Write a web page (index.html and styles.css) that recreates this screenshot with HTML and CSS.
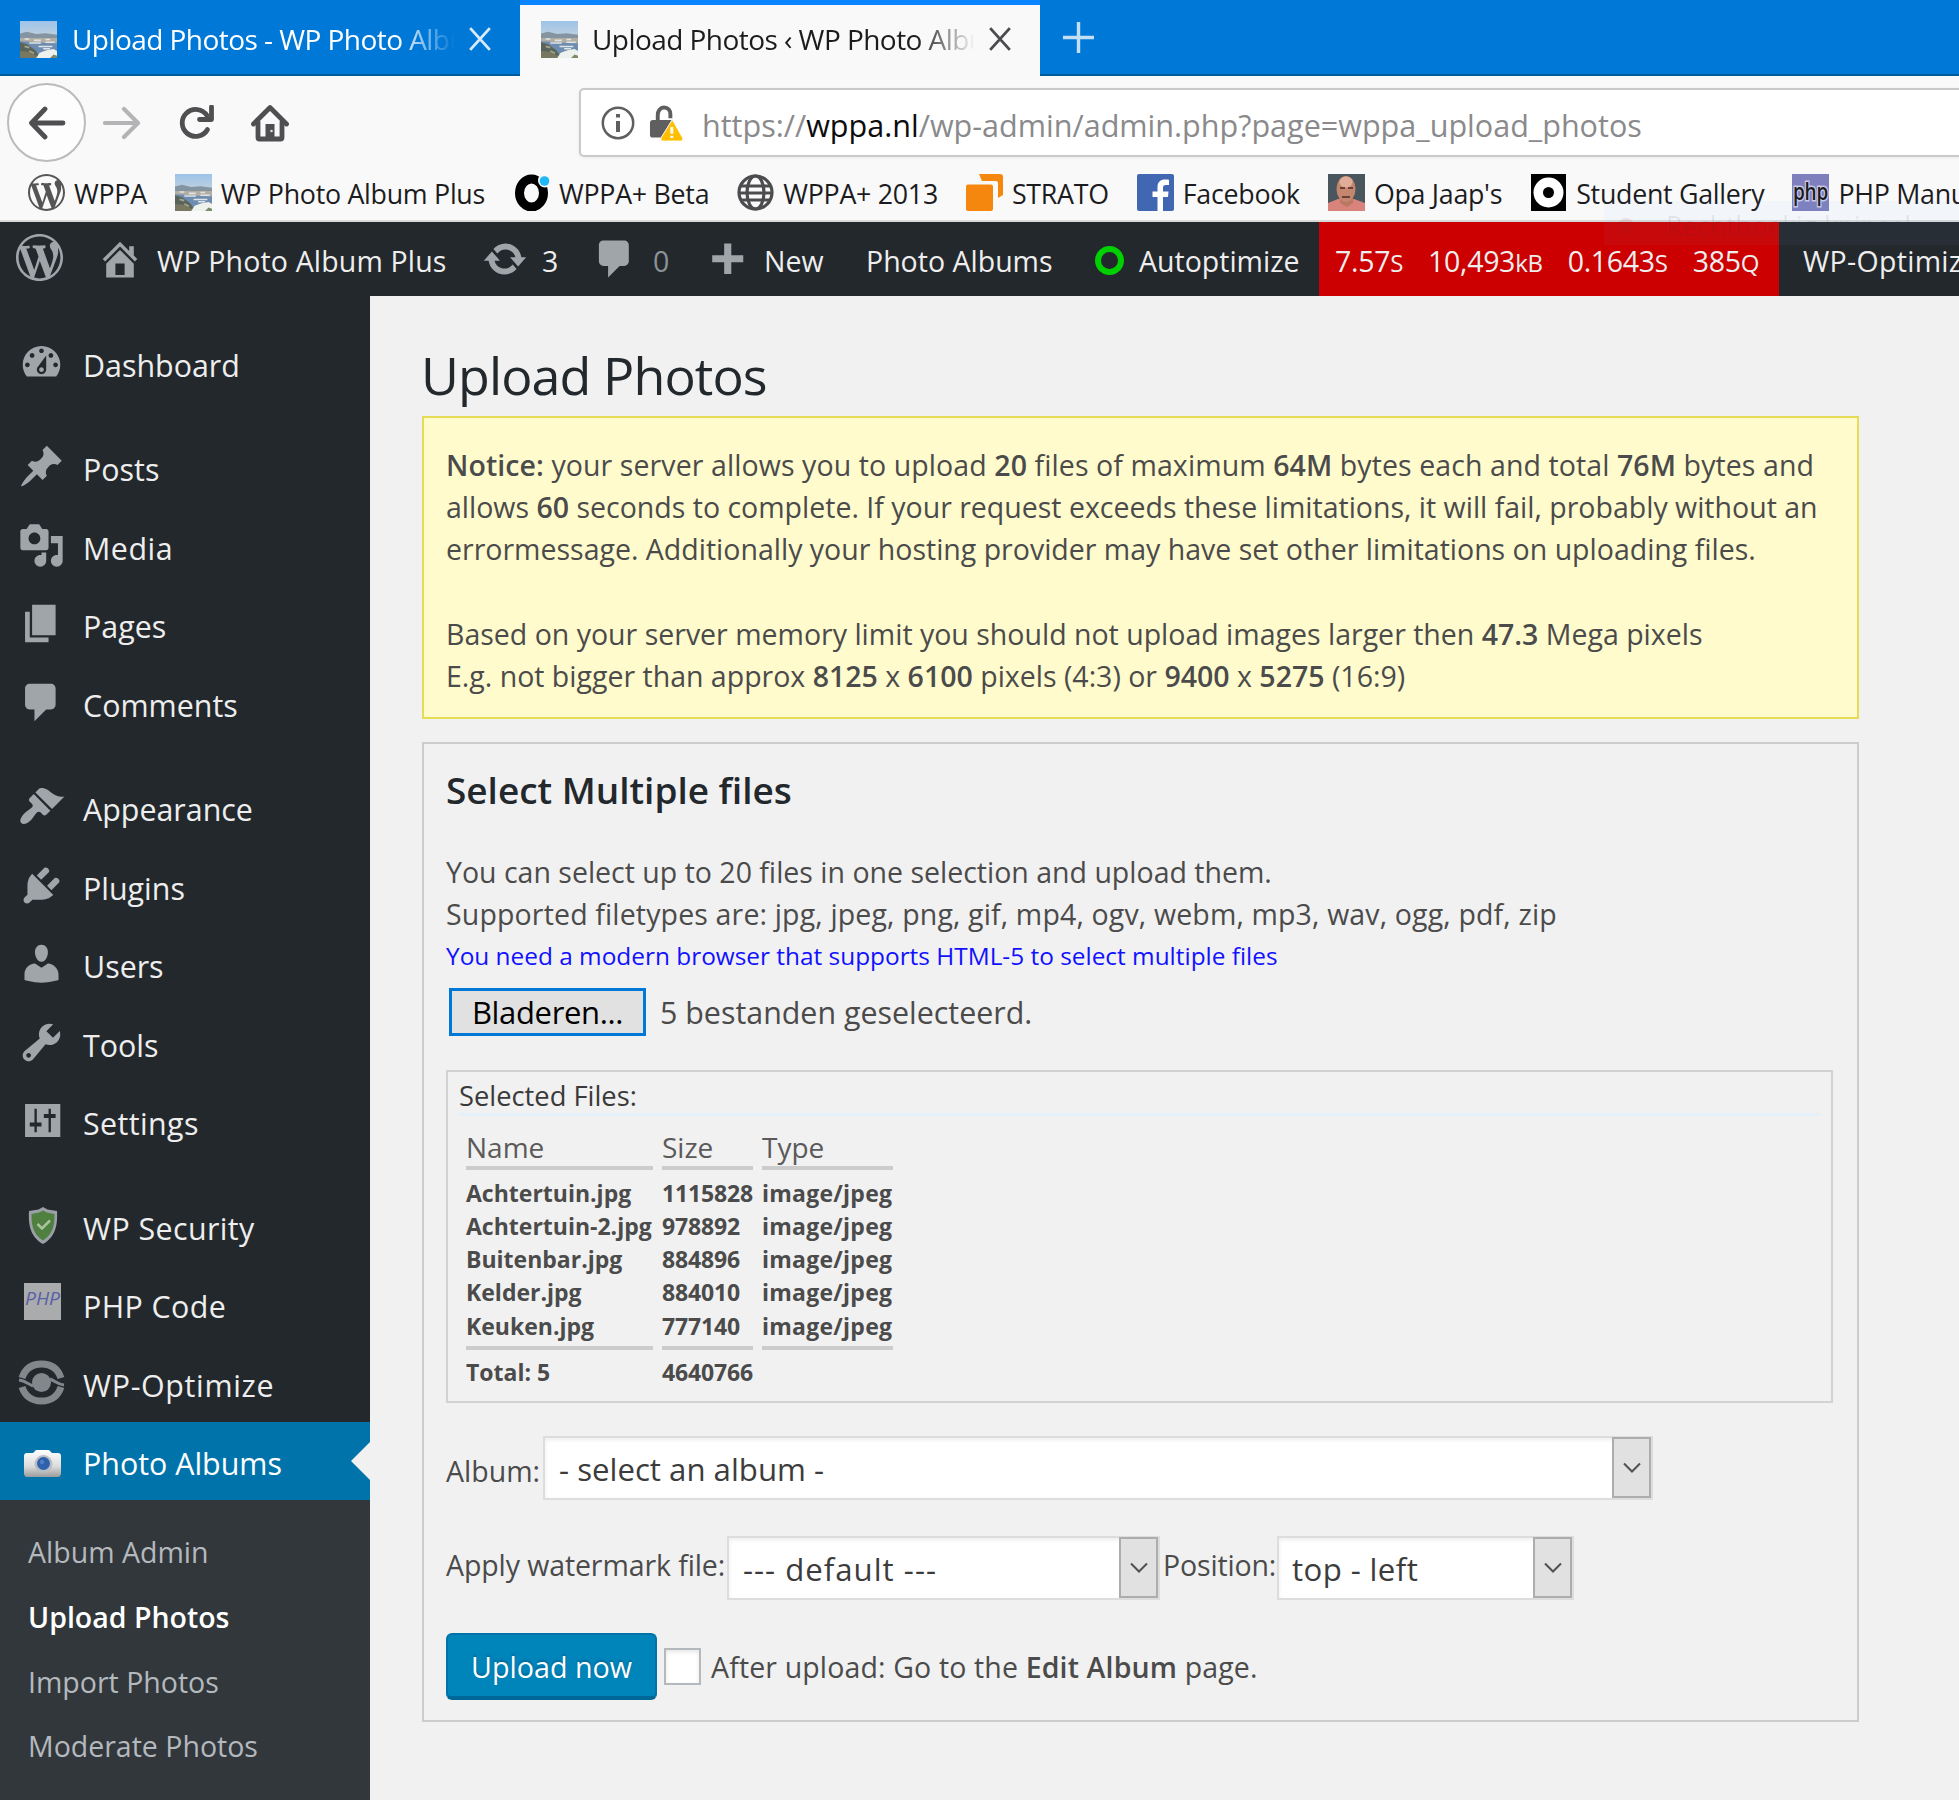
FILE: index.html
```html
<!DOCTYPE html>
<html lang="en">
<head>
  <meta charset="UTF-8" />
  <title>Upload Photos ‹ WP Photo Album Plus</title>
  <link rel="stylesheet" href="styles.css">
</head>
<body>
  <!-- shared icons -->
  <svg class="defs" aria-hidden="true">
    <linearGradient id="sky" x1="0" y1="0" x2="0" y2="1">
      <stop offset="0" stop-color="#9dc3ea" />
      <stop offset="1" stop-color="#bccfe0" />
    </linearGradient>
    <linearGradient id="silver" x1="0" y1="0" x2="0" y2="1">
      <stop offset="0" stop-color="#ffffff" />
      <stop offset=".6" stop-color="#dcdcdc" />
      <stop offset="1" stop-color="#9c9c9c" />
    </linearGradient>
    <symbol id="photo" viewBox="0 0 16 16">
      <rect width="16" height="16" fill="#8298ab" />
      <rect width="16" height="6" fill="url(#sky)" />
      <path d="M0 5.400l3-.7 4 .9 4-.3 5 .6V8H0z" fill="#8495a1" />
      <path d="M0 7.400h16v2H0z" fill="#b3aea4" />
      <path d="M0 8.800l6 .3 10 1V14H0z" fill="#6d8cb0" />
      <path d="M2 7.800h2M6 8.400h3M11 8h2M4 9.500h5M8 11h6M11 9.200h4M10 12h3" stroke="#dfe3e4" stroke-width=".7" />
      <path d="M0 9.200l3 .8 3.500 2.500L9 16H0z" fill="#59645a" />
      <path d="M2 11l2 .5M4 13l2 1" stroke="#a9a48c" stroke-width=".8" />
      <path d="M0 13l4 .3 3 1.600L8 16H0z" fill="#77785f" />
      <path d="M7 16l1.500-2.300 3-1 3-.6L16 13v3z" fill="#eef2ec" />
      <path d="M13 16l1.500-1.500L16 15v1z" fill="#7c8c6a" />
    </symbol>
    <symbol id="wp" viewBox="0 0 20 20">
      <path d="M20 10c0-5.51-4.49-10-10-10C4.48 0 0 4.49 0 10c0 5.52 4.48 10 10 10 5.51 0 10-4.48 10-10zM7.78 15.37L4.37 6.22c.55-.02 1.17-.08 1.17-.08.5-.06.44-1.13-.06-1.11 0 0-1.45.11-2.37.11-.18 0-.37 0-.58-.01C4.12 2.69 6.87 1.11 10 1.11c2.33 0 4.45.87 6.05 2.34-.68-.11-1.65.39-1.65 1.58 0 .74.45 1.36.9 2.1.35.61.55 1.36.55 2.46 0 1.49-1.4 5-1.4 5l-3.03-8.37c.54-.02.82-.17.82-.17.5-.05.44-1.25-.06-1.22 0 0-1.44.12-2.38.12-.87 0-2.33-.12-2.33-.12-.5-.03-.56 1.2-.06 1.22l.92.08 1.26 3.41zM17.41 10c.24-.64.74-1.87.43-4.25.7 1.29 1.05 2.71 1.05 4.25 0 3.29-1.73 6.24-4.4 7.78.97-2.59 1.94-5.2 2.92-7.78zM6.1 18.09C3.12 16.65 1.11 13.53 1.11 10c0-1.3.23-2.48.72-3.59C3.25 10.3 4.67 14.2 6.1 18.09zm4.03-6.63l2.58 6.98c-.86.29-1.76.45-2.71.45-.79 0-1.57-.11-2.29-.33.81-2.38 1.62-4.74 2.42-7.1z" />
    </symbol>
    <symbol id="comment" viewBox="0 0 20 20">
      <path d="M5 2h9c1.1 0 2 .9 2 2v7c0 1.1-.9 2-2 2h-2l-5 5v-5H5c-1.1 0-2-.9-2-2V4c0-1.1.9-2 2-2z" />
    </symbol>
  </svg>

  <div class="tabs">
    <div class="tab">
      <svg class="favicon"><use href="#photo" /></svg>
      <span class="tab-title">Upload Photos - WP Photo Albu</span>
      <svg class="tab-close" viewBox="0 0 22 22"><path d="M2 1l18 20M20 1L2 21" /></svg>
    </div>
    <div class="tab tab-active">
      <svg class="favicon"><use href="#photo" /></svg>
      <span class="tab-title">Upload Photos ‹ WP Photo Albu</span>
      <svg class="tab-close" viewBox="0 0 22 22"><path d="M2 1l18 20M20 1L2 21" /></svg>
    </div>
    <svg class="tab-new" viewBox="0 0 33 33"><path d="M16.500 1v31M1 16.500h31" /></svg>
  </div>

  <div class="toolbar">
    <div class="back">
      <svg viewBox="0 0 38 34"><path d="M35 17H4M17 3L3.500 17 17 31" /></svg>
    </div>
    <svg class="forward" viewBox="0 0 38 34"><path d="M2 17h32M21 3l14 14-14 14" /></svg>
    <svg class="reload" viewBox="0 0 38 36"><path d="M29.500 24.500A13.500 13.500 0 1 1 29 10.500" /><path d="M33.500 2v12.500H21.500" /></svg>
    <svg class="home" viewBox="0 0 38 38">
      <path d="M2.500 20L19 3.500 35.500 20" />
      <path d="M7 18v15.500c0 1 .5 1.500 1.500 1.500h21c1 0 1.500-.5 1.500-1.500V18" />
      <path d="M14.500 20h9v15h-9z" class="door" />
      <circle cx="20.500" cy="27" r="1.300" class="knob" />
    </svg>
    <div class="urlbar">
      <svg class="info" viewBox="0 0 34 34">
        <circle cx="17" cy="17" r="15.200" />
        <path d="M17 15v11M17 8v3.500" />
      </svg>
      <svg class="lock" viewBox="0 0 36 37">
        <path d="M9 17V10c0-4.600 2.500-8 6.500-8S22 5 22 9v4" class="shackle" />
        <path d="M4 15h20v18H4c-2 0-3-1-3-3V18c0-2 1-3 3-3z" fill="#5f5f5f" />
        <path d="M24 14.500L12.500 33c-1 2 0 3.600 2 3.600h18c2 0 3-1.600 2-3.600z" class="warn" />
        <path d="M23.500 22v7M23.500 31v2.500" class="mark" />
      </svg>
      <span class="url">https://<b>wppa.nl</b>/wp-admin/admin.php?page=wppa_upload_photos</span>
    </div>
  </div>

  <div class="bookmarks">
    <a><svg class="bm-wp"><use href="#wp" /></svg><span>WPPA</span></a>
    <a><svg><use href="#photo" /></svg><span>WP Photo Album Plus</span></a>
    <a>
      <svg viewBox="0 0 37 37"><ellipse cx="18.500" cy="19" rx="12" ry="14" fill="none" stroke="#000" stroke-width="9" /><circle cx="32" cy="6.500" r="7" fill="#f9f9fa" /><circle cx="31.500" cy="7" r="4.800" fill="#1db8f5" /></svg><span>WPPA+ Beta</span>
    </a>
    <a>
      <svg viewBox="0 0 37 37" class="globe"><circle cx="18.500" cy="18.500" r="16.500" /><ellipse cx="18.500" cy="18.500" rx="8.500" ry="16.500" /><path d="M4 12h29M2 19h33M4 26h29" /></svg><span>WPPA+ 2013</span>
    </a>
    <a>
      <svg viewBox="0 0 37 37" fill="#f5870f"><path d="M13 0h21a3 3 0 0 1 3 3v18l-5 3V9a2 2 0 0 0-2-2H16z" /><rect y="10.500" width="27" height="26.500" rx="2" /></svg><span>STRATO</span>
    </a>
    <a>
      <svg viewBox="0 0 37 37"><rect width="37" height="37" rx="2" fill="#4267b2" /><path d="M20.500 37V23h-5v-5.500h5V13c0-5 3-7.500 7.500-7.500 1.500 0 3 .1 4 .3V11h-3c-2.300 0-3 1-3 3v3.500h5.500L31 23h-5v14z" fill="#fff" /></svg><span>Facebook</span>
    </a>
    <a>
      <svg viewBox="0 0 37 37"><rect width="37" height="37" fill="#4a565e" /><path d="M0 37V29l10-4h16l11 4v8z" fill="#d8837c" /><path d="M12 20h13v9l-6 4-7-4z" fill="#b9785f" /><ellipse cx="18" cy="15" rx="9.500" ry="13" fill="#c4866c" /><ellipse cx="18" cy="8" rx="6.500" ry="5.500" fill="#e0ae98" /><path d="M12 14h5M20 14h5M14 23h8" stroke="#6b3f35" stroke-width="2" /></svg><span>Opa Jaap's</span>
    </a>
    <a>
      <svg viewBox="0 0 37 37"><rect x="1" width="35" height="37" fill="#000" /><circle cx="18.500" cy="18.500" r="15" fill="#fff" /><circle cx="18.500" cy="18.500" r="5.500" fill="#000" /></svg><span>Student Gallery</span>
    </a>
    <a>
      <svg viewBox="0 0 37 37"><rect width="37" height="37" fill="#7f7fbd" /><text x="1" y="26" class="php-icon" textLength="35" lengthAdjust="spacingAndGlyphs">php</text></svg><span>PHP Manual</span>
    </a>
  </div>

  <div class="adminbar">
    <svg class="ab-wp"><use href="#wp" /></svg>
    <div class="ab-item ab-site">
      <svg viewBox="0 0 20 20"><path d="M16 8.500l1.530 1.530-1.060 1.060L10 4.600l-6.470 6.490-1.060-1.060L10 2.500l4 4v-2h2v4zm-6-2.460l6 5.990V18H4v-5.970zM12 17v-5H8v5h4z" /></svg>
      <span>WP Photo Album Plus</span>
    </div>
    <div class="ab-item ab-updates">
      <svg viewBox="0 0 20 20"><path d="M10.200 3.280c3.530 0 6.430 2.610 6.920 6h2.080l-3.500 4-3.500-4h2.320c-.45-1.970-2.210-3.450-4.320-3.450-1.450 0-2.730.71-3.540 1.780L4.950 5.660C6.230 4.200 8.110 3.280 10.200 3.280zm-.4 13.440c-3.520 0-6.430-2.610-6.920-6H.8l3.500-4c1.170 1.330 2.330 2.670 3.500 4H5.480c.45 1.970 2.210 3.450 4.320 3.450 1.450 0 2.730-.71 3.540-1.780l1.710 1.950c-1.280 1.460-3.150 2.380-5.250 2.380z" /></svg>
      <span>3</span>
    </div>
    <div class="ab-item ab-comments">
      <svg><use href="#comment" /></svg>
      <span class="zero">0</span>
    </div>
    <div class="ab-item ab-new">
      <svg viewBox="0 0 20 20"><path d="M17.500 8.400v3h-5.200v5.100H9.200v-5.100H4v-3h5.200V3.300h3.100v5.100z" /></svg>
      <span>New</span>
    </div>
    <div class="ab-item ab-albums"><span>Photo Albums</span></div>
    <div class="ab-item ab-auto"><i class="ring"></i><span>Autoptimize</span></div>
    <div class="ab-item ab-stats">
      <span>7.57<small>S</small></span>
      <span>10,493<small>kB</small></span>
      <span>0.1643<small>S</small></span>
      <span>385<small>Q</small></span>
    </div>
    <div class="ab-item ab-optimize"><span>WP-Optimize</span></div>
  </div>

  <!-- fading snip menu entry -->
  <div class="ghost"><i></i><span>Rechthoekig knipsel</span></div>

  <div class="wrap">
    <div class="sidebar">
      <a class="menu"><svg viewBox="0 0 20 20"><path d="M3.760 16h12.480c1.100-1.370 1.760-3.110 1.760-5 0-4.420-3.580-8-8-8s-8 3.580-8 8c0 1.890.66 3.630 1.760 5zM10 4c.55 0 1 .45 1 1s-.45 1-1 1-1-.45-1-1 .45-1 1-1zM6 6c.55 0 1 .45 1 1s-.45 1-1 1-1-.45-1-1 .45-1 1-1zm8 0c.55 0 1 .45 1 1s-.45 1-1 1-1-.45-1-1 .45-1 1-1zm-5.370 5.550L12 7v6c0 1.100-.9 2-2 2s-2-.9-2-2c0-.57.24-1.080.63-1.450zM4 10c.55 0 1 .45 1 1s-.45 1-1 1-1-.45-1-1 .45-1 1-1zm12 0c.55 0 1 .45 1 1s-.45 1-1 1-1-.45-1-1 .45-1 1-1zm-5 3c0-.55-.45-1-1-1s-1 .45-1 1 .45 1 1 1 1-.45 1-1z" /></svg><span>Dashboard</span></a>
      <div class="separator"></div>
      <a class="menu"><svg viewBox="0 0 20 20"><path d="M10.440 3.020l1.820-1.820 6.360 6.350-1.830 1.820c-1.050-.68-2.480-.57-3.410.36l-.75.75c-.92.93-1.040 2.350-.35 3.410l-1.830 1.820-2.410-2.410-2.800 2.790c-.42.42-3.380 2.710-3.800 2.290s1.860-3.390 2.280-3.810l2.790-2.790L4.100 9.360l1.830-1.820c1.050.69 2.480.57 3.400-.36l.75-.75c.93-.92 1.050-2.350.36-3.410z" /></svg><span>Posts</span></a>
      <a class="menu"><svg viewBox="0 0 20 20"><path d="M13 11V4c0-.55-.45-1-1-1h-1.670L9 1H5L3.670 3H2c-.55 0-1 .45-1 1v7c0 .55.45 1 1 1h10c.55 0 1-.45 1-1zM7 4.500c1.380 0 2.500 1.120 2.500 2.500S8.380 9.500 7 9.500 4.500 8.380 4.500 7 5.620 4.500 7 4.500zM14 6h5v10.500c0 1.380-1.120 2.500-2.500 2.500S14 17.880 14 16.500s1.120-2.500 2.500-2.500c.17 0 .34.02.5.05V9h-3V6zm-4 8.050V13h2v3.500c0 1.380-1.120 2.500-2.500 2.500S7 17.880 7 16.500 8.120 14 9.500 14c.17 0 .34.02.5.05z" /></svg><span class="media">Media</span></a>
      <a class="menu"><svg viewBox="0 0 20 20"><path d="M6 15V2h10v13H6zm-1 1h8v2H3V5h2v11z" /></svg><span>Pages</span></a>
      <a class="menu"><svg><use href="#comment" /></svg><span>Comments</span></a>
      <div class="separator"></div>
      <a class="menu"><svg viewBox="0 0 20 20"><path d="M14.480 11.060L7.410 3.990l1.500-1.500c.5-.56 2.300-.47 3.510.32 1.210.8 1.430 1.280 2.910 2.100 1.180.64 2.450 1.260 4.450.85zm-.71.71L6.700 4.700 4.930 6.470c-.39.39-.39 1.020 0 1.410l1.060 1.060c.39.39.39 1.030 0 1.420-.6.6-1.430 1.110-2.210 1.690-.35.26-.7.53-1.010.84C1.430 14.230.4 16.080 1.400 17.070c.99 1 2.840-.03 4.180-1.360.31-.31.58-.66.85-1.020.57-.78 1.080-1.610 1.690-2.210.39-.39 1.020-.39 1.410 0l1.060 1.060c.39.39 1.020.39 1.410 0z" /></svg><span>Appearance</span></a>
      <a class="menu"><svg viewBox="0 0 20 20"><path d="M13.110 4.360L9.870 7.600 8 5.730l3.240-3.240c.35-.34 1.050-.2 1.560.32.52.51.66 1.210.31 1.550zm-8 1.770l.91-1.120 9.010 9.010-1.190.84c-.71.71-2.630 1.160-3.820 1.160H6.140L4.900 17.260c-.59.59-1.540.59-2.120 0-.59-.58-.59-1.530 0-2.120l1.240-1.240v-3.880c0-1.130.4-3.190 1.090-3.890zm7.260 3.970l3.240-3.240c.34-.35 1.040-.21 1.550.31.52.51.66 1.210.31 1.550l-3.240 3.250z" /></svg><span>Plugins</span></a>
      <a class="menu"><svg viewBox="0 0 20 20"><path d="M10 9.250c-2.270 0-2.730-3.440-2.730-3.440C7 4.020 7.820 2 9.970 2c2.160 0 2.980 2.020 2.710 3.810 0 0-.41 3.440-2.680 3.440zm0 2.570L12.720 10c2.390 0 4.520 2.330 4.520 4.530v2.490s-3.650 1.130-7.240 1.130c-3.650 0-7.240-1.130-7.240-1.130v-2.490c0-2.250 1.940-4.480 4.470-4.480z" /></svg><span>Users</span></a>
      <a class="menu"><svg viewBox="0 0 20 20"><path d="M16.680 9.770c-1.340 1.340-3.300 1.670-4.950.99l-5.410 6.520c-.99.99-2.590.99-3.580 0s-.99-2.590 0-3.570l6.520-5.420c-.68-1.650-.35-3.610.99-4.950 1.280-1.280 3.120-1.620 4.720-1.060l-2.890 2.890 2.820 2.820 2.860-2.870c.53 1.580.18 3.390-1.080 4.650zM3.810 16.210c.4.39 1.040.39 1.430 0 .4-.4.4-1.040 0-1.430-.39-.4-1.030-.4-1.430 0-.39.39-.39 1.030 0 1.430z" /></svg><span>Tools</span></a>
      <a class="menu"><svg viewBox="0 0 20 20"><path d="M3 3h15v14H3zM7 5v5.800H5v1.700h2V15h1v-2.500h2v-1.700H8V5zm6 0v2.200h-2v1.700h2V15h1V8.900h2V7.200h-2V5z" fill-rule="evenodd" /></svg><span class="wide">Settings</span></a>
      <div class="separator"></div>
      <a class="menu">
        <svg viewBox="0 0 47 47">
          <path d="M25 5l4.500 2.500 9.500 1.500c.5 10 .5 25-14 33C10.500 34 10.500 19 11 9l9.500-1.500z" fill="#9aa0a5" />
          <path d="M25 8.500l4 2 7.500 1.500c0 9-.5 19.500-11.500 26.500C14 31.500 13.500 21 13.500 12l7.500-1.500z" fill="#4f8040" />
          <path d="M19.500 22l4.500 4.500 8-8" fill="none" stroke="#a9c49d" stroke-width="2.500" />
        </svg><span class="wide">WP Security</span>
      </a>
      <a class="menu">
        <svg viewBox="0 0 47 47"><rect x="6" y="3" width="37" height="37" fill="#a9abac" /><text x="7" y="25" class="php-menu" textLength="35" lengthAdjust="spacingAndGlyphs">PHP</text></svg><span class="wide">PHP Code</span>
      </a>
      <a class="menu">
        <svg viewBox="0 0 47 47" class="optimize">
          <path d="M4 19C7 10 14 5 23.500 5S40 10 43 19" />
          <path d="M4 28C7 37 14 42 23.500 42S40 37 43 28" />
          <path d="M1 21c6 .5 9 4 14 6M46 26c-6-.5-9-4-14-6" class="thin" />
          <circle cx="23.500" cy="23.500" r="9.500" />
        </svg><span class="wider">WP-Optimize</span>
      </a>
      <a class="menu menu-active">
        <svg viewBox="0 0 47 47">
          <path d="M6 19c0-2 1-3 3-3h6l3-3h13l3 3h6c2 0 3 1 3 3v17c0 2-1 4-3 4H9c-2 0-3-2-3-4z" fill="url(#silver)" />
          <circle cx="25.500" cy="27" r="9" fill="#b9bec6" />
          <circle cx="25.500" cy="26.500" r="6.500" fill="#2f62ab" />
          <circle cx="24" cy="25" r="2.200" fill="#4f7fc4" />
        </svg><span>Photo Albums</span>
      </a>
      <div class="submenu">
        <a>Album Admin</a>
        <a class="current">Upload Photos</a>
        <a>Import Photos</a>
        <a>Moderate Photos</a>
      </div>
    </div>

    <div class="content">
      <h1>Upload Photos</h1>
      <div class="notice">
        <span class="line-one"><b>Notice:</b> your server allows you to upload <b>20</b> files of maximum <b>64M</b> bytes each and total <b>76M</b> bytes and</span><br>
        allows <b>60</b> seconds to complete. If your request exceeds these limitations, it will fail, probably without an<br>
        errormessage. Additionally your hosting provider may have set other limitations on uploading files.<br>
        <br>
        Based on your server memory limit you should not upload images larger then <b>47.3</b> Mega pixels<br>
        E.g. not bigger than approx <b>8125</b> x <b>6100</b> pixels (4:3) or <b>9400</b> x <b>5275</b> (16:9)
      </div>

      <div class="panel">
        <h3>Select Multiple files</h3>
        <p>You can select up to 20 files in one selection and upload them.</p>
        <p class="types">Supported filetypes are: jpg, jpeg, png, gif, mp4, ogv, webm, mp3, wav, ogg, pdf, zip</p>
        <p class="hint">You need a modern browser that supports HTML-5 to select multiple files</p>
        <div class="file-row">
          <button class="browse">Bladeren...</button>
          <span>5 bestanden geselecteerd.</span>
        </div>

        <div class="files">
          <div class="files-title">Selected Files:</div>
          <table>
            <thead>
              <tr><td class="c-name">Name</td><td class="c-size">Size</td><td class="c-type">Type</td></tr>
            </thead>
            <tbody>
              <tr class="first"><td>Achtertuin.jpg</td><td>1115828</td><td>image/jpeg</td></tr>
              <tr><td>Achtertuin-2.jpg</td><td>978892</td><td>image/jpeg</td></tr>
              <tr><td>Buitenbar.jpg</td><td>884896</td><td>image/jpeg</td></tr>
              <tr><td>Kelder.jpg</td><td>884010</td><td>image/jpeg</td></tr>
              <tr class="last"><td>Keuken.jpg</td><td>777140</td><td>image/jpeg</td></tr>
              <tr class="total"><td>Total: 5</td><td>4640766</td><td></td></tr>
            </tbody>
          </table>
        </div>

        <div class="row row-album">
          <label>Album:</label>
          <div class="select select-album"><span>- select an album -</span><i><svg viewBox="0 0 18 12"><path d="M1 1.500l8 8 8-8" /></svg></i></div>
        </div>
        <div class="row row-watermark">
          <label class="l-file">Apply watermark file:</label>
          <div class="select select-file"><span>--- default ---</span><i><svg viewBox="0 0 18 12"><path d="M1 1.500l8 8 8-8" /></svg></i></div>
          <label class="l-pos">Position:</label>
          <div class="select select-pos"><span>top - left</span><i><svg viewBox="0 0 18 12"><path d="M1 1.500l8 8 8-8" /></svg></i></div>
        </div>
        <div class="row row-submit">
          <button class="upload">Upload now</button>
          <i class="checkbox"></i>
          <span class="after">After upload: Go to the <b>Edit Album</b> page.</span>
        </div>
      </div>
    </div>
  </div>
</body>
</html>
```
FILE: styles.css
```css
:root {
  --dark: #23282d;
  --icon: #a0a5aa;
  --text: #4b4b4b;
  --line: #cccccc;
}

* {
  box-sizing: border-box;
}

body {
  margin: 0;
  height: 1800px;
  overflow: hidden;
  background: #f1f1f1;
  color: var(--text);
  font-family: "Open Sans", "Noto Sans", sans-serif;
  font-size: 28.5px;
  white-space: nowrap;
}

b {
  font-weight: 600;
}

svg {
  flex: none;
}

.defs {
  position: absolute;
  width: 0;
  height: 0;
}

/* browser tabs */
.tabs {
  display: flex;
  height: 76px;
  background: #0078d7;
  border-bottom: 2px solid #005a9e;
}

.tab {
  display: flex;
  align-items: center;
  width: 520px;
  height: 76px;
  padding: 2px 28px 0 20px;
  color: #fff;
  font-size: 28px;
  letter-spacing: -0.55px;
}

.tab-active {
  background: #f9f9fa;
  border-top: 5px solid #0a84ff;
  padding: 0 28px 3px 21px;
  color: #1c1c1e;
}

.favicon {
  width: 37px;
  height: 37px;
}

.tab-title {
  width: 383px;
  margin-left: 15px;
  overflow: hidden;
  -webkit-mask-image: linear-gradient(to right, #000 325px, transparent 383px);
  mask-image: linear-gradient(to right, #000 325px, transparent 383px);
}

.tab-active .tab-title {
  margin-left: 14px;
}

.tab-close {
  width: 24px;
  height: 24px;
  margin-left: 13px;
  fill: none;
  stroke: #d9ebfa;
  stroke-width: 2.6;
}

.tab-active .tab-close {
  margin-left: 14px;
  stroke: #4a4a4f;
}

.tab-new {
  width: 33px;
  height: 33px;
  margin: 21px 0 0 22px;
  fill: none;
  stroke: #c3dff7;
  stroke-width: 3.4;
}

/* navigation */
.toolbar {
  display: flex;
  align-items: center;
  height: 88px;
  padding: 5px 0 0 7px;
  background: #f9f9fa;
}

.toolbar > svg,
.back svg {
  fill: none;
  stroke: #4f4f52;
  stroke-width: 4.8;
  stroke-linecap: round;
  stroke-linejoin: round;
}

.back {
  display: flex;
  align-items: center;
  justify-content: center;
  width: 79px;
  height: 79px;
  border: 2px solid #bbb;
  border-radius: 50%;
  background: #fdfdfd;
}

.back svg {
  width: 38px;
  height: 34px;
}

.toolbar .forward {
  width: 38px;
  height: 34px;
  margin-left: 17px;
  stroke: #b4b4b6;
  stroke-width: 4.2;
}

.reload {
  width: 38px;
  height: 36px;
  margin-left: 37px;
}

.home {
  width: 38px;
  height: 38px;
  margin-left: 35px;
}

.home .door {
  fill: #4f4f52;
  stroke: none;
}

.home .knob {
  fill: #ddd;
  stroke: none;
}

.urlbar {
  display: flex;
  align-items: center;
  flex: 1;
  height: 69px;
  margin-left: 290px;
  margin-right: -10px;
  padding-left: 20px;
  background: #fff;
  border: 2px solid #c9c9c9;
  border-radius: 5px;
  box-shadow: 0 1px 4px rgba(0, 0, 0, 0.06);
}

.info {
  width: 34px;
  height: 34px;
  fill: none;
  stroke: #5f5f5f;
  stroke-width: 2.5;
}

.info path {
  stroke-width: 4;
}

.lock {
  width: 35px;
  height: 37px;
  margin: 2px 0 0 14px;
}

.shackle {
  fill: none;
  stroke: #5f5f5f;
  stroke-width: 4;
}

.warn {
  fill: #ffbf00;
  stroke: #fff;
  stroke-width: 1;
}

.mark {
  stroke: #fff;
  stroke-width: 3;
}

.url {
  margin-left: 18px;
  padding-top: 4px;
  font-size: 30.55px;
  color: #8a8a8c;
}

.url b {
  font-weight: 400;
  color: #0c0c0d;
}

/* bookmarks */
.bookmarks {
  display: flex;
  gap: 28px;
  height: 58px;
  padding: 10px 0 0 28px;
  background: #f9f9fa;
  border-bottom: 2px solid #d8d8d8;
  color: #1c1c1e;
  font-size: 26.8px;
  letter-spacing: -0.28px;
  overflow: hidden;
}

.bookmarks a {
  display: flex;
  align-items: center;
  gap: 9px;
  height: 37px;
}

.bookmarks span {
  padding-top: 1px;
}

.bookmarks svg {
  width: 37px;
  height: 37px;
}

.bm-wp {
  fill: #555;
}

.globe {
  fill: none;
  stroke: #4c4c4f;
  stroke-width: 3.2;
}

.php-icon {
  font-size: 24px;
  font-weight: 600;
  fill: #1b1b1f;
  stroke: #c9c9e6;
  stroke-width: 3px;
  paint-order: stroke;
}

/* admin bar */
.adminbar {
  display: flex;
  align-items: center;
  height: 74px;
  background: var(--dark);
  color: #eee;
  fill: var(--icon);
  overflow: hidden;
}

.ab-wp {
  width: 47px;
  height: 47px;
  margin: -3px 0 0 16px;
}

.ab-item {
  display: flex;
  align-items: center;
  flex: none;
  height: 74px;
}

.ab-item svg {
  width: 46px;
  height: 46px;
}

.ab-item span {
  padding-top: 4px;
}

.ab-site {
  gap: 14px;
  margin-left: 34px;
  width: 353px;
  letter-spacing: 0.15px;
}

.ab-updates {
  gap: 14px;
  margin-left: 32px;
  width: 75px;
}

.ab-comments {
  gap: 15px;
  margin-left: 35px;
  width: 77px;
}

.zero {
  color: #8d9297;
}

.ab-new {
  gap: 15px;
  margin-left: 34px;
  width: 121px;
}

.ab-albums {
  margin-left: 42px;
  width: 187px;
}

.ab-auto {
  gap: 15px;
  margin-left: 42px;
  width: 205px;
}

.ring {
  width: 29px;
  height: 29px;
  margin-top: 3px;
  border: 6px solid #00d000;
  border-radius: 50%;
}

.ab-stats {
  gap: 25px;
  width: 460px;
  margin-left: 19px;
  padding-left: 16px;
  background: #cc0000;
  letter-spacing: -0.3px;
}

.ab-stats small {
  font-size: 24px;
}

.ab-optimize {
  margin-left: 24px;
  letter-spacing: 0.3px;
}

.ghost {
  position: absolute;
  top: 201px;
  right: 0;
  display: flex;
  align-items: center;
  width: 355px;
  height: 44px;
  padding-top: 5px;
  background: rgba(110, 170, 230, 0.05);
  color: rgba(60, 50, 60, 0.09);
  font-size: 26.4px;
}

.ghost i {
  width: 16px;
  height: 16px;
  margin: 0 32px 0 14px;
  border-radius: 50%;
  background: rgba(140, 30, 30, 0.09);
}

/* page */
.wrap {
  display: flex;
  height: 1504px;
}

.sidebar {
  display: flex;
  flex-direction: column;
  width: 370px;
  padding-top: 27px;
  background: var(--dark);
}

.menu {
  display: flex;
  align-items: center;
  gap: 18px;
  height: 78.5px;
  flex: none;
  padding-left: 18px;
  color: #eee;
  font-size: 30.4px;
  fill: var(--icon);
}

.menu svg {
  width: 47px;
  height: 47px;
}

.menu span {
  padding-top: 6px;
}

.menu .media {
  letter-spacing: 0.5px;
}

.menu .wide {
  letter-spacing: 0.4px;
}

.menu .wider {
  letter-spacing: 0.65px;
}

.separator {
  height: 26px;
  flex: none;
}

.php-menu {
  font-size: 18px;
  font-style: italic;
  fill: #5a5fa8;
}

.optimize {
  fill: #82878c;
}

.optimize path {
  fill: none;
  stroke: #82878c;
  stroke-width: 7;
}

.optimize .thin {
  stroke-width: 3;
}

.menu-active {
  position: relative;
  background: #0073aa;
  color: #fff;
}

.menu-active::after {
  content: "";
  position: absolute;
  right: 0;
  top: 20px;
  border: 19px solid transparent;
  border-left-width: 0;
  border-right-color: #f1f1f1;
}

.submenu {
  flex: 1;
  padding: 20px 0 0 28px;
  background: #32373c;
  line-height: 64.8px;
  color: #b4b9be;
}

.submenu a {
  display: block;
}

.submenu .current {
  color: #fff;
  font-weight: 600;
}

.content {
  width: 1437px;
  margin-left: 52px;
  padding-top: 44px;
}

h1 {
  margin: 0 0 6px -1px;
  font-size: 52px;
  line-height: 70px;
  font-weight: 400;
  letter-spacing: -0.9px;
  color: #23282d;
}

.notice {
  height: 303px;
  padding: 26px 22px 0;
  border: 2px solid #e6db55;
  background: #fffbcc;
  line-height: 42.2px;
}

.line-one {
  letter-spacing: 0.09px;
}

.panel {
  height: 980px;
  margin-top: 23px;
  padding: 21px 22px 0;
  border: 2px solid var(--line);
}

h3 {
  margin: 0 0 36px;
  font-size: 36.95px;
  line-height: 50px;
  font-weight: 600;
  color: #23282d;
}

p {
  margin: 0;
  line-height: 42.2px;
}

.types {
  letter-spacing: 0.15px;
}

.hint {
  font-size: 24.4px;
  color: #1111ff;
}

.file-row {
  display: flex;
  align-items: center;
  gap: 14px;
  height: 48px;
  margin: 10px 0 34px 3px;
  font-size: 30.4px;
}

.file-row span {
  padding-top: 2px;
}

.browse {
  width: 197px;
  height: 48px;
  padding: 0;
  border: 3px solid #0078d7;
  background: #e1e1e1;
  color: #000;
  font-family: inherit;
  font-size: 31px;
  letter-spacing: -0.35px;
  line-height: 42px;
}

.files {
  height: 333px;
  width: 1387px;
  padding: 6px 11px 0;
  border: 2px solid #d2d2d2;
}

.files-title {
  line-height: 35px;
  border-bottom: 3px solid #e5f0fb;
  font-size: 27.3px;
  color: #3a3a3a;
}

table {
  margin: 12px 0 0 -2px;
  border-collapse: separate;
  border-spacing: 9px 0;
  font-size: 23px;
  line-height: 33.25px;
  font-weight: 700;
}

td {
  padding: 0;
}

thead td {
  border-bottom: 4px solid var(--line);
  font-size: 28px;
  line-height: 38px;
  font-weight: 400;
  color: #5a5a5a;
}

.c-name {
  width: 187px;
}

.c-size {
  width: 91px;
}

.c-type {
  width: 131px;
}

tbody td:nth-child(2) {
  letter-spacing: -0.15px;
}

tbody td:last-child {
  letter-spacing: 0.25px;
}

.first td {
  padding-top: 7px;
}

.last td {
  padding-bottom: 3px;
  border-bottom: 4px solid var(--line);
}

.total td {
  padding-top: 6px;
}

.row {
  display: flex;
  align-items: center;
  height: 64px;
}

.row-album {
  margin-top: 33px;
}

.row-album label {
  width: 97px;
  padding-top: 6px;
}

.row-watermark {
  margin-top: 36px;
}

.row-watermark label {
  padding-bottom: 5px;
}

.l-file {
  width: 281px;
  letter-spacing: -0.1px;
}

.l-pos {
  width: 117px;
  padding-left: 3px;
  letter-spacing: -0.15px;
}

.select {
  display: flex;
  align-items: center;
  justify-content: space-between;
  height: 64px;
  padding-left: 14px;
  border: 2px solid #ddd;
  background: #fff;
  box-shadow: inset 0 2px 4px rgba(0, 0, 0, 0.07);
  font-size: 31.2px;
  color: #3c3c3c;
}

.select span {
  padding-top: 3px;
}

.select i {
  display: flex;
  align-items: center;
  justify-content: center;
  width: 39px;
  height: 61px;
  border: 2px solid #adadad;
  background: #e1e1e1;
}

.select svg {
  width: 18px;
  height: 12px;
  fill: none;
  stroke: #505050;
  stroke-width: 2;
}

.select-album {
  width: 1110px;
}

.select-file {
  width: 433px;
  letter-spacing: 1px;
}

.select-pos {
  width: 297px;
  padding-left: 13px;
  letter-spacing: 0.4px;
}

.row-submit {
  height: 67px;
  margin-top: 33px;
}

.upload {
  width: 211px;
  height: 67px;
  padding: 2px 0 0;
  border: 2px solid #0073aa;
  border-bottom: 4px solid #006799;
  border-radius: 6px;
  background: #0085ba;
  color: #fff;
  font-family: inherit;
  font-size: 28.7px;
  text-shadow: 0 -2px 2px #006799;
}

.checkbox {
  width: 37px;
  height: 37px;
  margin: 0 10px 0 7px;
  border: 2px solid #b4b9be;
  background: #fff;
  box-shadow: inset 0 2px 4px rgba(0, 0, 0, 0.1);
}

.after {
  padding-top: 2px;
  letter-spacing: 0.14px;
}
```
